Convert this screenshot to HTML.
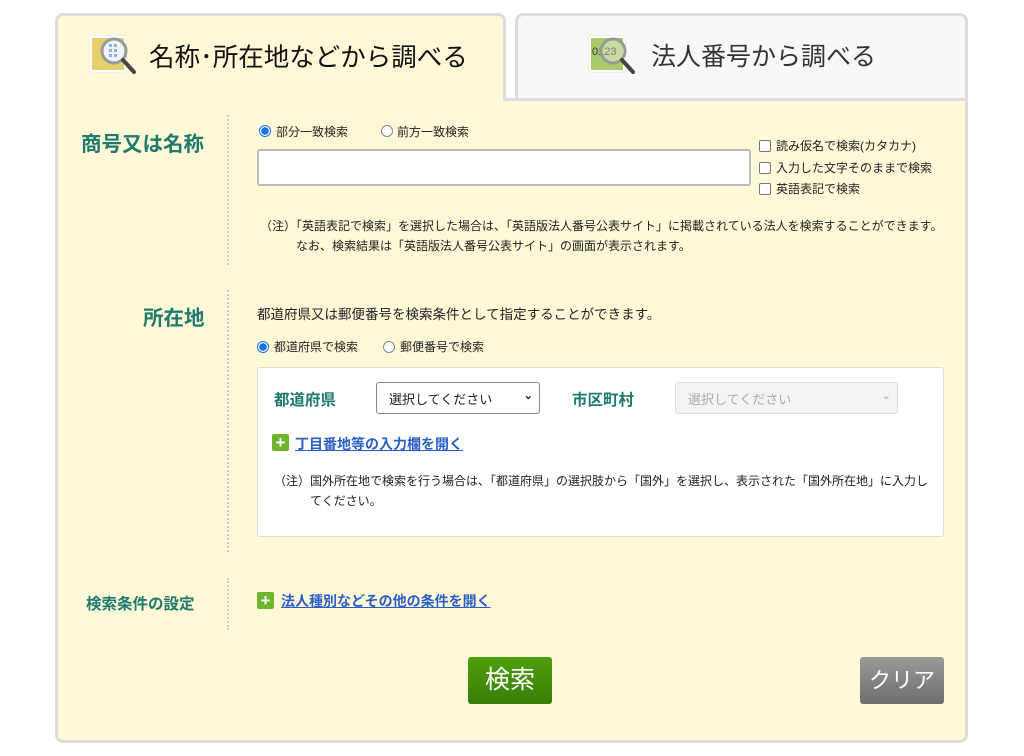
<!DOCTYPE html>
<html><head><meta charset="utf-8"><style>
*{margin:0;padding:0;box-sizing:border-box}
body{width:1024px;height:756px;background:#fff;position:relative;overflow:hidden;font-family:"Liberation Sans","Noto Sans CJK JP",sans-serif;color:#222}
.a{position:absolute;white-space:nowrap}
.tab1{left:55px;top:13px;width:451px;height:100px;background:#fff9d8;border:3px solid #ddd;border-bottom:none;border-radius:8px 8px 0 0}
.tab2{left:515px;top:13px;width:453px;height:88px;background:#f8f8f8;border:3px solid #ddd;border-bottom:none;border-radius:8px 8px 0 0}
.body{left:55px;top:98px;width:913px;height:645px;background:#fff9d8;border:3px solid #ddd;border-top:none;border-radius:0 0 8px 8px}
.bodytop{left:503px;top:98px;width:465px;height:3px;background:#ddd}
.lbl{color:#1f7a6e;font-weight:bold}
.div{width:0;border-left:2px dotted #ccc}
.rad{width:12px;height:12px;border-radius:50%;border:1px solid #888;background:#fff}
.rad.on{border:1px solid #1a73e8;background:radial-gradient(circle,#1a73e8 3.5px,#fff 4px)}
.cb{width:12px;height:12px;border:1px solid #777;border-radius:2px;background:#fff}
.s12{font-size:12px}
.plus{width:17px;height:17px;background:#6cb52c;border-radius:2px;color:#fff;font-weight:bold;font-size:17px;line-height:17px;text-align:center}
.lnk{color:#2b5fc7;text-decoration:underline;font-weight:bold;font-size:14px}
</style></head><body>
<div class="a tab1"></div>
<div class="a tab2"></div>
<div class="a body"></div>
<div class="a bodytop"></div>

<div class="a" style="left:89px;top:35px;width:38px;height:38px;background:#fff;border-radius:4px;border:1px solid #eee"></div>
<div class="a" style="left:92px;top:38px;width:32px;height:32px;background:#e4cf6a"></div>
<svg class="a" style="left:95px;top:34px" width="50" height="46"><circle cx="19" cy="17" r="12" fill="#eef4f8" stroke="#999" stroke-width="3"/><g fill="#8fb3d6"><rect x="14" y="10" width="3" height="3"/><rect x="19" y="10" width="3" height="3"/><rect x="14" y="15" width="3" height="3"/><rect x="19" y="15" width="3" height="3"/><rect x="14" y="20" width="3" height="3"/><rect x="19" y="20" width="3" height="3"/></g><line x1="28" y1="26" x2="39" y2="38" stroke="#444" stroke-width="4" stroke-linecap="round"/></svg>
<div class="a" style="left:149px;top:37px;font-size:25.5px;color:#111">名称･所在地などから調べる</div>

<div class="a" style="left:588px;top:35px;width:38px;height:38px;background:#fff;border-radius:4px;border:1px solid #eee"></div>
<div class="a" style="left:591px;top:38px;width:32px;height:32px;background:#a9c96a"></div>
<div class="a" style="left:592px;top:46px;font-size:11px;color:#333">0123</div>
<svg class="a" style="left:594px;top:34px" width="50" height="46"><circle cx="19" cy="17" r="12" fill="rgba(255,255,255,.35)" stroke="#999" stroke-width="3"/><line x1="28" y1="26" x2="39" y2="38" stroke="#444" stroke-width="4" stroke-linecap="round"/></svg>
<div class="a" style="left:651px;top:37px;font-size:25px;color:#333">法人番号から調べる</div>

<div class="a lbl" style="left:81px;top:127px;font-size:20.5px">商号又は名称</div>
<div class="a div" style="left:227px;top:115px;height:150px"></div>
<div class="a rad on" style="left:259px;top:125px"></div>
<div class="a s12" style="left:276px;top:123px">部分一致検索</div>
<div class="a rad" style="left:381px;top:125px"></div>
<div class="a s12" style="left:397px;top:123px">前方一致検索</div>
<div class="a" style="left:257px;top:149px;width:494px;height:37px;background:#fff;border:2px solid #bbb;border-radius:3px"></div>
<div class="a cb" style="left:759px;top:140px"></div><div class="a s12" style="left:776px;top:137px">読み仮名で検索(カタカナ)</div>
<div class="a cb" style="left:759px;top:162px"></div><div class="a s12" style="left:776px;top:159px">入力した文字そのままで検索</div>
<div class="a cb" style="left:759px;top:183px"></div><div class="a s12" style="left:776px;top:180px">英語表記で検索</div>
<div class="a s12" style="left:260px;top:217px">（注）「英語表記で検索」を選択した場合は、「英語版法人番号公表サイト」に掲載されている法人を検索することができます。</div>
<div class="a s12" style="left:296px;top:237px">なお、検索結果は「英語版法人番号公表サイト」の画面が表示されます。</div>

<div class="a lbl" style="left:143px;top:301px;font-size:20.5px">所在地</div>
<div class="a div" style="left:227px;top:290px;height:262px"></div>
<div class="a" style="left:257px;top:303px;font-size:13.5px">都道府県又は郵便番号を検索条件として指定することができます。</div>
<div class="a rad on" style="left:257px;top:341px"></div>
<div class="a s12" style="left:274px;top:338px">都道府県で検索</div>
<div class="a rad" style="left:383px;top:341px"></div>
<div class="a s12" style="left:400px;top:338px">郵便番号で検索</div>
<div class="a" style="left:257px;top:367px;width:687px;height:170px;background:#fff;border:1px solid #ddd;border-radius:3px"></div>
<div class="a lbl" style="left:274px;top:388px;font-size:15.5px">都道府県</div>
<div class="a" style="left:376px;top:382px;width:164px;height:32px;background:#fff;border:1px solid #888;border-radius:3px;font-size:13px;padding:6px 0 0 12px">選択してください<span style="position:absolute;right:6px;top:6px;font-size:11px;font-weight:bold">&#8964;</span></div>
<div class="a lbl" style="left:572px;top:388px;font-size:15.5px">市区町村</div>
<div class="a" style="left:675px;top:382px;width:223px;height:32px;background:#f4f4f4;border:1px solid #ddd;border-radius:3px;font-size:13px;color:#aaa;padding:6px 0 0 12px">選択してください<span style="position:absolute;right:6px;top:6px;font-size:11px">&#8964;</span></div>
<div class="a plus" style="left:272px;top:434px">+</div>
<div class="a lnk" style="left:295px;top:434px">丁目番地等の入力欄を開く</div>
<div class="a s12" style="left:274px;top:472px">（注）国外所在地で検索を行う場合は、「都道府県」の選択肢から「国外」を選択し、表示された「国外所在地」に入力し</div>
<div class="a s12" style="left:310px;top:492px">てください。</div>

<div class="a lbl" style="left:86px;top:592px;font-size:15.5px">検索条件の設定</div>
<div class="a div" style="left:227px;top:578px;height:52px"></div>
<div class="a plus" style="left:257px;top:592px">+</div>
<div class="a lnk" style="left:281px;top:591px">法人種別などその他の条件を開く</div>

<div class="a" style="left:468px;top:657px;width:84px;height:47px;background:linear-gradient(#4e9f0c,#3a7e06);border-radius:3px;color:#fff;font-size:25px;text-align:center;line-height:47px">検索</div>
<div class="a" style="left:860px;top:657px;width:84px;height:47px;background:linear-gradient(#9a9a9a,#6e6e6e);border-radius:3px;color:#fff;font-size:22px;text-align:center;line-height:47px">クリア</div>
</body></html>
